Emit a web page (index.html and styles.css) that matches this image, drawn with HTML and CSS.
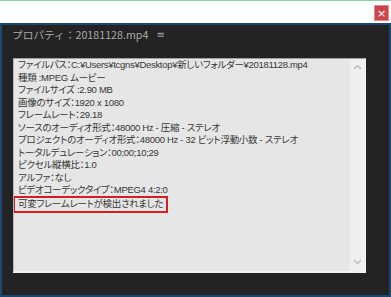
FILE: index.html
```html
<!DOCTYPE html>
<html lang="ja">
<head>
<meta charset="utf-8">
<link rel="stylesheet" href="styles.css">
</head>
<body>
<div class="topbar">
  <button class="close" aria-label="閉じる">×</button>
</div>
<div class="panel">
  <div class="panel-title">
    <span>プロパティ：20181128.mp4</span>
    <span class="menu">≡</span>
  </div>
  <div class="box">
    <div class="content">
      <div class="line">ファイルパス：C:¥Users¥tcgns¥Desktop¥新しいフォルダー¥20181128.mp4</div>
      <div class="line">種類 :MPEG ムービー</div>
      <div class="line">ファイルサイズ :2.90 MB</div>
      <div class="line">画像のサイズ：1920 x 1080</div>
      <div class="line">フレームレート：29.18</div>
      <div class="line">ソースのオーディオ形式：48000 Hz - 圧縮 - ステレオ</div>
      <div class="line">プロジェクトのオーディオ形式：48000 Hz - 32 ビット浮動小数 - ステレオ</div>
      <div class="line">トータルデュレーション：00;00;10;29</div>
      <div class="line">ピクセル縦横比：1.0</div>
      <div class="line">アルファ：なし</div>
      <div class="line">ビデオコーデックタイプ：MPEG4 4:2:0</div>
      <div class="line highlight">可変フレームレートが検出されました</div>
    </div>
    <div class="scrollbar">
      <svg class="chev" width="9" height="6" viewBox="0 0 9 6"><path d="M1 5 L4.5 1.5 L8 5" fill="none" stroke="#b4b4b4" stroke-width="1.2"/></svg>
      <svg class="chev" width="9" height="6" viewBox="0 0 9 6"><path d="M1 1 L4.5 4.5 L8 1" fill="none" stroke="#b4b4b4" stroke-width="1.2"/></svg>
    </div>
  </div>
</div>
</body>
</html>
```

FILE: styles.css
```css
html, body {
  margin: 0;
  padding: 0;
  background: #ffffff;
  width: 391px;
  height: 297px;
  overflow: hidden;
  font-family: "Noto Sans CJK JP", "Noto Sans", sans-serif;
}

.topbar {
  height: 22px;
  border-top: 1px solid #8fd0a6;
  background: #ffffff;
  display: flex;
  justify-content: flex-end;
  align-items: flex-start;
  padding-right: 2px;
}

.close {
  margin-top: 4px;
  width: 15px;
  height: 16px;
  padding: 0;
  border: 1px solid #e48c8c;
  background: #c9474a;
  color: #f4dada;
  font-size: 11px;
  line-height: 13px;
  font-family: "DejaVu Sans", sans-serif;
  font-weight: bold;
}

.panel {
  height: 270px;
  background: #232323;
  border: 2px solid #1d4670;
  display: flex;
  flex-direction: column;
}

.panel-title {
  height: 33px;
  padding: 3px 0 0 10px;
  box-sizing: border-box;
  color: #a9a9a9;
  font-size: 10.7px;
  line-height: 14px;
  display: flex;
  gap: 8px;
}

.menu {
  font-family: "DejaVu Sans", sans-serif;
  font-size: 10px;
  color: #9a9a9a;
}

.box {
  margin-left: 11px;
  width: 353px;
  height: 215px;
  box-sizing: border-box;
  background: #e6e6e6;
  border-top: 1px solid #a0a0a0;
  border-left: 1px solid #b4b4b4;
  border-right: 1px solid #f4f4f4;
  border-bottom: 2px solid #f2f2f2;
  display: flex;
}

.content {
  flex: 1;
  padding: 0 0 0 4px;
  color: #363636;
  font-family: "Liberation Sans", "Noto Sans CJK JP", sans-serif;
  font-feature-settings: "palt";
  font-size: 9.5px;
  letter-spacing: -0.3px;
  line-height: 12.55px;
  white-space: nowrap;
  overflow: hidden;
}

.line {
  height: 12.55px;
}

.highlight {
  display: inline-block;
  margin-left: -5px;
  margin-top: -1px;
  padding: 0 3px 0 3px;
  border: 2px solid #d81d22;
  height: auto;
}

.scrollbar {
  width: 15px;
  background: #efefef;
  display: flex;
  flex-direction: column;
  justify-content: space-between;
  align-items: center;
  padding: 5px 0 6px;
  box-sizing: border-box;
}

.chev {
  display: block;
}
```
